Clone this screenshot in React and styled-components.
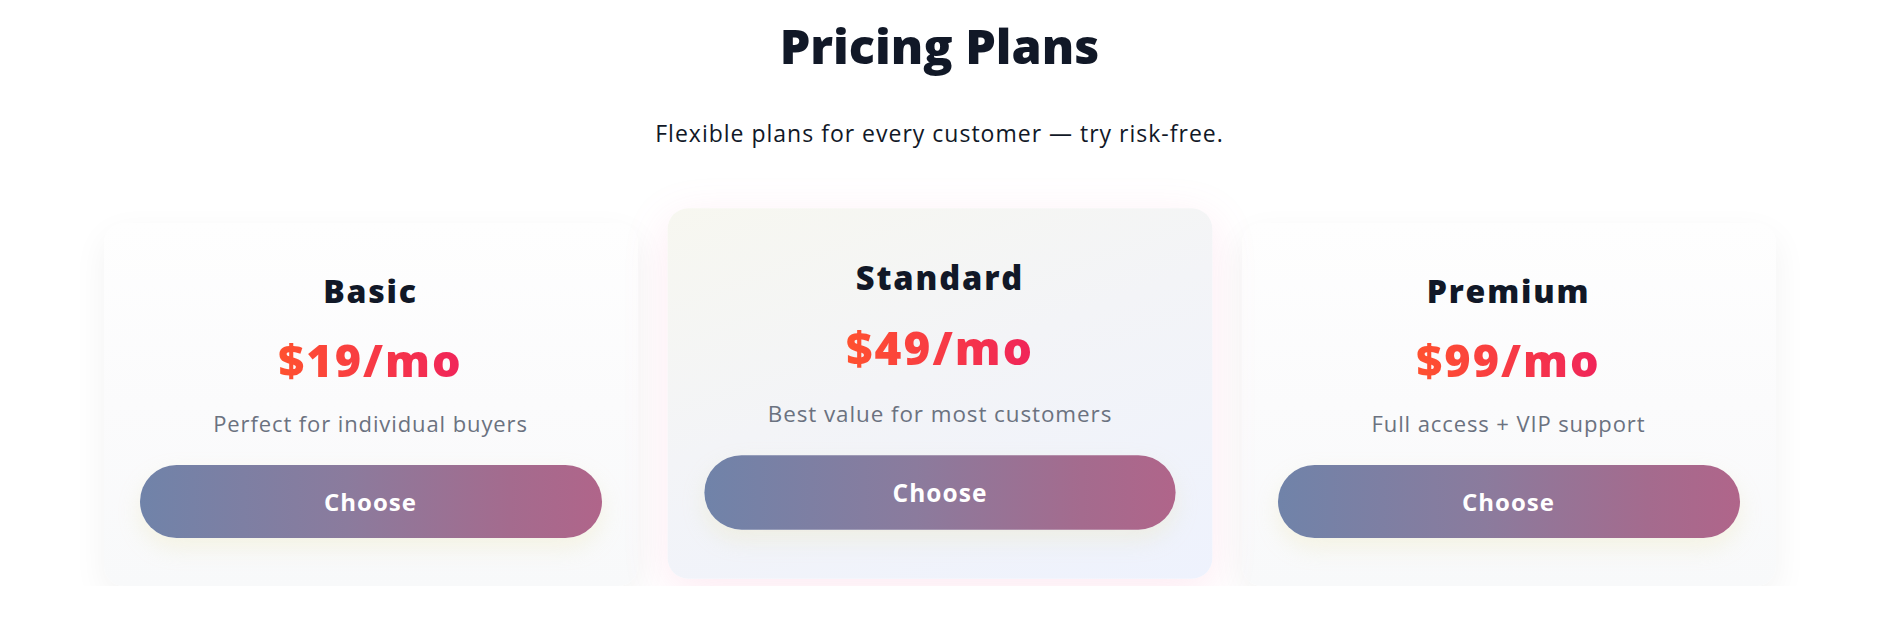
import React from "react";
import styled, { createGlobalStyle } from "styled-components";

const GlobalStyle = createGlobalStyle`
  html, body { margin: 0; padding: 0; background: #ffffff; }
  body { font-family: "Open Sans", "Noto Sans", sans-serif; color: #111827; }
`;

const Page = styled.main`
  display: flex;
  flex-direction: column;
  align-items: center;
  padding-top: 21px;
`;

const Title = styled.h1`
  margin: 0;
  font-size: 48.5px;
  line-height: 1;
  font-weight: 800;
  color: #111827;
`;

const Subtitle = styled.p`
  margin: 52px 0 0;
  font-size: 23px;
  line-height: 1;
  font-weight: 400;
  letter-spacing: 1px;
  color: #111827;
`;

const Grid = styled.section`
  display: grid;
  grid-template-columns: repeat(3, 1fr);
  gap: 35px;
  width: 100%;
  max-width: 1672px;
  margin-top: 78px;
`;

const Card = styled.article`
  display: flex;
  flex-direction: column;
  align-items: center;
  padding: 52px 36px 48px;
  border-radius: 20px;
  background: ${(p) =>
    p.$featured
      ? "linear-gradient(160deg, #f7f7f0 0%, #f3f4f7 45%, #eef2fd 100%)"
      : "linear-gradient(180deg, #fefefe 0%, #fbfbfc 50%, #f8f9fa 100%)"};
  box-shadow: ${(p) =>
    p.$featured
      ? "0 12px 44px rgba(244, 114, 168, 0.15)"
      : "0 12px 34px rgba(0, 0, 0, 0.055)"};
  transform: ${(p) => (p.$featured ? "translateY(-11px) scale(1.02)" : "none")};
`;

const PlanName = styled.h2`
  margin: 0;
  font-size: 32px;
  line-height: 1;
  font-weight: 800;
  letter-spacing: 1.8px;
  color: #111827;
`;

const Price = styled.div`
  margin-top: 30px;
  font-size: 45px;
  line-height: 1;
  font-weight: 800;
  letter-spacing: 2px;
  background: linear-gradient(90deg, #ff512f 0%, #f0245a 100%);
  -webkit-background-clip: text;
  background-clip: text;
  color: transparent;
`;

const Description = styled.p`
  margin: 30px 0 0;
  font-size: 22px;
  line-height: 1;
  font-weight: 400;
  letter-spacing: 0.9px;
  color: #6b7280;
`;

const ChooseButton = styled.button`
  margin-top: 31px;
  width: 100%;
  height: 73px;
  border: none;
  border-radius: 999px;
  background: linear-gradient(90deg, #7083a9 0%, #8b7b9d 45%, #a46b8e 80%, #b0658a 100%);
  color: #ffffff;
  font-family: inherit;
  font-size: 24px;
  font-weight: 700;
  letter-spacing: 1px;
  cursor: pointer;
  box-shadow: 0 10px 22px rgba(235, 225, 170, 0.28);
`;

const plans = [
  { name: "Basic", price: "$19/mo", desc: "Perfect for individual buyers" },
  { name: "Standard", price: "$49/mo", desc: "Best value for most customers", featured: true },
  { name: "Premium", price: "$99/mo", desc: "Full access + VIP support" },
];

export default function App() {
  return (
    <>
      <GlobalStyle />
      <Page>
        <Title>Pricing Plans</Title>
        <Subtitle>Flexible plans for every customer — try risk-free.</Subtitle>
        <Grid>
          {plans.map((p) => (
            <Card key={p.name} $featured={p.featured}>
              <PlanName>{p.name}</PlanName>
              <Price>{p.price}</Price>
              <Description>{p.desc}</Description>
              <ChooseButton>Choose</ChooseButton>
            </Card>
          ))}
        </Grid>
      </Page>
    </>
  );
}
